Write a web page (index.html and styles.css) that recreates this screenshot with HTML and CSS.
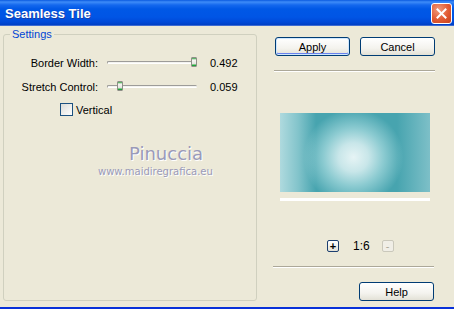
FILE: index.html
```html
<!doctype html>
<html lang=en >
<head>
<meta charset=utf-8 >
<title>Seamless Tile</title>
<link rel="stylesheet" href="styles.css">
</head>
<body>

	<div id=window >

		<div id=titleBar >
			<span id=title >Seamless Tile</span>
			<div id=butClose >
				<svg width=11 height=11 viewBox="0 0 11 11" ><path d="M1.5 1.5 L9.5 9.5 M9.5 1.5 L1.5 9.5" stroke="#fff" stroke-width="2" stroke-linecap="square" /></svg>
			</div>
		</div>

		<div id=main >

			<fieldset id=settings >
				<legend>Settings</legend>

				<div class=row >
					<span class=label >Border Width:</span>
					<div class=slider ><div class=track ></div><div class=thumb style="left:84px" ></div></div>
					<span class=value >0.492</span>
				</div>

				<div class=row >
					<span class=label >Stretch Control:</span>
					<div class=slider ><div class=track ></div><div class=thumb style="left:10px" ></div></div>
					<span class=value >0.059</span>
				</div>

				<div class=check >
					<span class=box ></span>
					<span>Vertical</span>
				</div>

				<div id=mark >
					<div class=name >Pinuccia</div>
					<div class=site >www.maidiregrafica.eu</div>
				</div>

			</fieldset>

			<div id=side >

				<div class=buttons >
					<div class="button default" >Apply</div>
					<div class=button >Cancel</div>
				</div>

				<div class=sep ></div>

				<div id=preview ></div>
				<div id=previewBar ></div>

				<div id=zoomRow >
					<span class="zbut on" >+</span>
					<span class=ratio >1:6</span>
					<span class="zbut off" >-</span>
				</div>

				<div class=sep ></div>

				<div class=help ><div class=button >Help</div></div>

			</div>

		</div>

	</div>

</body>
</html>
```

FILE: styles.css
```css
html, body { margin: 0; height: 100%; overflow: hidden; }
body { background-color: #ece9d8; font: 11px "Liberation Sans", Arial, sans-serif; color: #000; }

#window { display: flex; flex-direction: column; width: 454px; height: 309px; border-bottom: 2px solid #0831d9; box-sizing: border-box; }

#titleBar { align-items: center; background: linear-gradient( to bottom, #0a5ae0 0, #3e8cf8 2px, #1468ee 5px, #0058e6 9px, #0055e5 17px, #0049d8 22px, #003fc4 25px, #7a96df 26px ); display: flex; flex: none; height: 26px; justify-content: space-between; }
#title { color: #fff; font: bold 13px "Liberation Sans", Arial, sans-serif; margin-left: 5px; text-shadow: 1px 1px 0 #1a3fa8; }

#butClose { align-items: center; background: radial-gradient( circle at 35% 30%, #f09a7c, #e25b33 55%, #c7411c ); border: 1px solid #fff; border-radius: 3px; box-sizing: border-box; display: flex; height: 21px; justify-content: center; margin-right: 2px; margin-top: 1px; width: 21px; }

#main { display: flex; flex: 1; }

#settings { border: 1px solid #d0d0bf; border-radius: 3px; box-sizing: border-box; height: 273px; margin: 2px 0 0 3px; padding: 0; width: 254px; }
#settings legend { color: #0046d5; line-height: 13px; margin-left: 6px; padding: 0 2px; }

.row { align-items: center; display: flex; height: 14px; margin-top: 15px; }
.row + .row { margin-top: 10px; }
.label { text-align: right; width: 94px; }
.slider { height: 10px; margin-left: 9px; position: relative; width: 90px; }
.track { border-bottom: 1px solid #fff; border-radius: 2px; border-top: 1px solid #9d9c99; border-left: 1px solid #9d9c99; background: #f3f3ef; height: 1px; margin-top: 3px; }
.thumb { background: linear-gradient( to bottom, #2f9f3c 0, #f7f7f4 2px, #e4e4de 6px, #21a93b 7px, #198f2c 10px ); border: 1px solid #8f8f88; border-radius: 1px; box-sizing: border-box; height: 10px; position: absolute; top: -1px; width: 6px; }
.value { margin-left: 13px; }

.check { align-items: center; display: flex; gap: 3px; margin: 9px 0 0 56px; }
.box { background: linear-gradient( 135deg, #dcdcd7, #fff ); border: 1px solid #1c5180; box-sizing: border-box; height: 13px; width: 13px; }

#mark { color: #9a9ab9; font-family: "DejaVu Sans", sans-serif; margin-top: 27px; text-shadow: 1px 1px 0 #fff; }
#mark .name { font-size: 18px; margin-left: 125px; }
#mark .site { font-size: 10px; margin: 2px 0 0 94px; }

#side { display: flex; flex-direction: column; margin-left: 16px; width: 163px; }

.buttons { display: flex; gap: 10px; margin: 11px 0 0 2px; }
.button { align-items: center; background: linear-gradient( to bottom, #fff, #f4f3ee 60%, #e3e1d6 ); border: 1px solid #003c74; border-radius: 3px; box-sizing: border-box; display: flex; height: 19px; justify-content: center; width: 75px; }
.button.default { box-shadow: inset 0 0 0 1px #cee7ff, inset 0 -1px 0 1px #6982ee; }

.sep { border-bottom: 1px solid #fff; border-top: 1px solid #aca899; height: 0; margin-top: 14px; width: 161px; }
.buttons + .sep { margin-left: 1px; }

#preview { background: linear-gradient( to right, rgba( 210, 236, 238, 0.75 ) 0, rgba( 180, 222, 226, 0.55 ) 12%, rgba( 75, 166, 176, 0 ) 24%, rgba( 75, 166, 176, 0 ) 78%, rgba( 170, 214, 220, 0.55 ) 100% ), radial-gradient( ellipse 50px 48px at 49% 56%, #e6f4f5 0, #c8e6e9 30%, #8ccbd1 60%, #47a4af 100% ) #47a4af; height: 79px; margin: 41px 0 0 7px; width: 150px; }
#previewBar { background: #fff; height: 3px; margin: 6px 0 0 7px; width: 150px; }

#zoomRow { align-items: center; display: flex; height: 12px; margin: 39px 0 0 54px; }
.zbut { align-items: center; border-radius: 2px; box-sizing: border-box; display: flex; font-size: 11px; height: 12px; justify-content: center; line-height: 1; width: 12px; }
.zbut.on { background: linear-gradient( to bottom, #fff, #e3e1d6 ); border: 1px solid #1c3f70; font-weight: bold; }
.zbut.off { background: #f0eee6; border: 1px solid #cac8bb; color: #aca899; }
.ratio { font-size: 12px; margin: 0 12px 0 14px; }

.help { display: flex; justify-content: flex-end; margin: 14px 2px 0 0; }
```
